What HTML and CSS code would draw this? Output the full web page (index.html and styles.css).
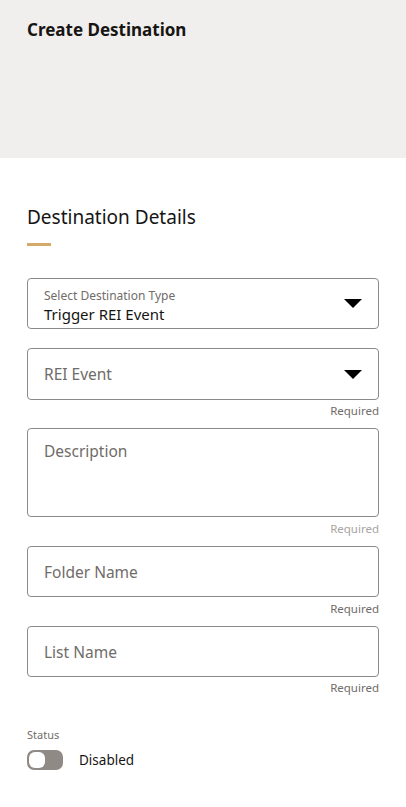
FILE: index.html
```html
<!DOCTYPE html>
<html>
<head>
<meta charset="utf-8">
<link rel="stylesheet" href="styles.css">
</head>
<body>
<div class="page">
  <header class="header">
    <h1 class="title">Create Destination</h1>
  </header>
  <main class="main">
    <h2 class="section-title">Destination Details</h2>
    <div class="accent"></div>

    <div class="field box select filled">
      <div class="content">
        <div class="float-label">Select Destination Type</div>
        <div class="value">Trigger REI Event</div>
      </div>
      <span class="caret"></span>
    </div>

    <div class="field box select">
      <div class="content"><div class="placeholder">REI Event</div></div>
      <span class="caret"></span>
    </div>
    <div class="help">Required</div>

    <div class="field box textarea">
      <div class="placeholder">Description</div>
    </div>
    <div class="help light">Required</div>

    <div class="field box">
      <div class="content"><div class="placeholder">Folder Name</div></div>
    </div>
    <div class="help tall">Required</div>

    <div class="field box">
      <div class="content"><div class="placeholder">List Name</div></div>
    </div>
    <div class="help">Required</div>

    <div class="status">
      <div class="status-label">Status</div>
      <div class="switch-row">
        <span class="switch"><span class="knob"></span></span>
        <span class="switch-text">Disabled</span>
      </div>
    </div>
  </main>
</div>
</body>
</html>
```

FILE: styles.css
```css
* { box-sizing: border-box; }
html, body { margin: 0; padding: 0; background: #ffffff; }
body { font-family: "Noto Sans", "Open Sans", sans-serif; color: #161513; }

.header {
  background: #f1efed;
  height: 158px;
  padding: 18px 27px 0;
}
.title {
  margin: 0;
  font-size: 17px;
  line-height: 24px;
  font-weight: 700;
  color: #161513;
}

.main { padding: 46px 27px 0; }
.section-title {
  margin: 0;
  font-size: 19px;
  line-height: 26px;
  font-weight: 400;
  color: #161513;
}
.accent {
  width: 24px;
  height: 3px;
  background: #d4aa6a;
  margin-top: 13px;
  margin-bottom: 32px;
}

.box {
  border: 1px solid #8c8a88;
  border-radius: 4px;
  display: flex;
  align-items: center;
  padding: 0 16px;
  height: 51px;
}
.select.filled { margin-bottom: 19px; }
.select:not(.filled) { height: 52px; }
.content { flex: 1; }
.filled .content { padding-top: 5px; }
.float-label {
  font-size: 12px;
  line-height: 16px;
  color: #6f6c69;
}
.value {
  font-size: 15px;
  line-height: 20px;
  color: #161513;
}
.placeholder {
  font-size: 15.5px;
  line-height: 20px;
  color: #6f6c69;
}
.caret {
  width: 0; height: 0;
  border-left: 9.5px solid transparent;
  border-right: 9.5px solid transparent;
  border-top: 9px solid #000000;
}
.textarea {
  height: 89px;
  align-items: flex-start;
  padding-top: 12px;
}
.help {
  text-align: right;
  font-size: 11.5px;
  line-height: 16px;
  color: #6f6c69;
  padding-top: 3px;
  height: 28px;
}
.help.light { color: #a8a5a2; height: 29px; padding-top: 4px; }
.help.tall { height: 29px; padding-top: 4px; }

.status { margin-top: 23px; }
.status-label {
  font-size: 11px;
  line-height: 14px;
  color: #6f6c69;
}
.switch-row {
  display: flex;
  align-items: center;
  margin-top: 8px;
}
.switch {
  width: 36px;
  height: 20px;
  border-radius: 7px;
  background: #8f8a85;
  position: relative;
  display: inline-block;
}
.knob {
  position: absolute;
  left: 2px; top: 2px;
  width: 16px; height: 16px;
  border-radius: 6px;
  background: #ffffff;
}
.switch-text {
  margin-left: 16px;
  font-size: 13.5px;
  line-height: 20px;
  color: #161513;
}
```
